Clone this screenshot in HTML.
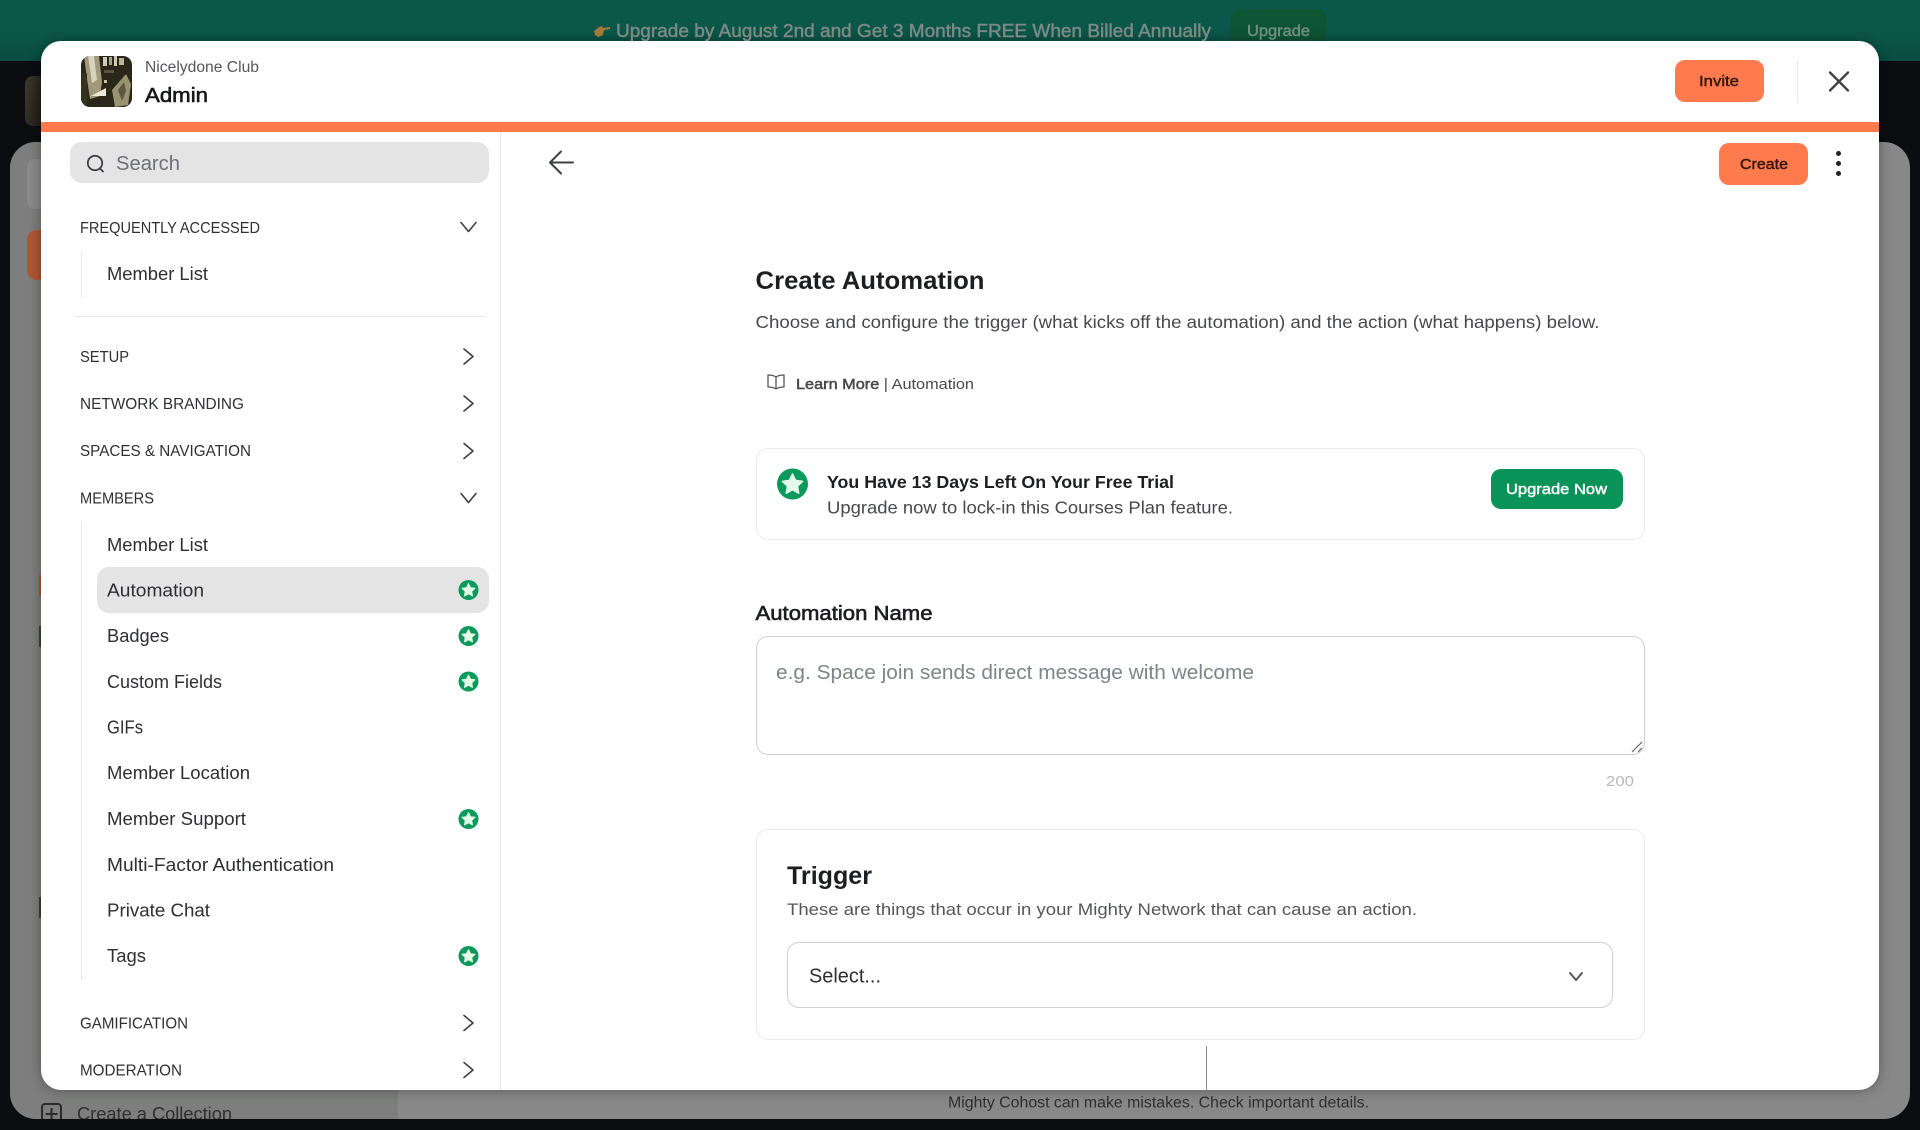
<!DOCTYPE html>
<html lang="en">
<head>
<meta charset="utf-8">
<title>Create Automation</title>
<style>
html,body{margin:0;padding:0;width:1920px;height:1130px;overflow:hidden;background:#0b0d11;font-family:"Liberation Sans",sans-serif}
.a{position:absolute;box-sizing:border-box}
svg{position:absolute;left:0;top:0;filter:blur(.3px)}
text{font-family:"Liberation Sans",sans-serif;white-space:pre}
.sec{font-size:15.5px;fill:#2f3033}
.it{font-size:18px;fill:#2e2f33}
.m{stroke-width:.45px}
</style>
</head>
<body>
<div class="a" style="left:0;top:0;width:1920px;height:61px;background:linear-gradient(#0b584a 0,#0b5749 55%,#094c3f 100%)"></div>
<div class="a" style="left:1231px;top:9px;width:96px;height:40px;border-radius:10px;background:#0d5534"></div>
<div class="a" style="left:25px;top:76px;width:30px;height:50px;border-radius:8px;background:linear-gradient(100deg,#3e3a2e,#1f1d16 60%,#3a3629)"></div>
<div class="a" style="left:10px;top:142px;width:1900px;height:977px;border-radius:26px;background:#888;overflow:hidden">
  <div class="a" style="left:0;top:0;width:388px;height:977px;background:#7d7e7d"></div>
  <div class="a" style="left:17px;top:17px;width:40px;height:50px;border-radius:8px;background:#8a8a8a"></div>
  <div class="a" style="left:17px;top:88px;width:40px;height:50px;border-radius:10px;background:#ad5735"></div>
  <div class="a" style="left:29px;top:433px;width:6px;height:21px;background:#ad5735"></div>
  <div class="a" style="left:29px;top:484px;width:6px;height:21px;background:#3d403f"></div>
  <div class="a" style="left:29px;top:755px;width:6px;height:21px;background:#3d3d38"></div>
</div>

<div class="a" style="left:41px;top:41px;width:1838px;height:1048.500px;border-radius:20px;background:#fff;overflow:hidden;box-shadow:0 0 12px rgba(0,0,0,.35)">
  <div class="a" style="left:0;top:81px;width:1838px;height:10px;background:#ff7b4d"></div>
  <div class="a" style="left:459px;top:91px;width:1px;height:958px;background:#e8e8e8"></div>
  <div class="a" style="left:29px;top:101px;width:419px;height:41px;border-radius:12px;background:#e4e4e4"></div>
  <div class="a" style="left:40px;top:210px;width:1px;height:46px;background:#e6e6e6"></div>
  <div class="a" style="left:34px;top:275px;width:409px;height:1px;background:#e6e6e6"></div>
  <div class="a" style="left:40px;top:481px;width:1px;height:458px;background:#e6e6e6"></div>
  <div class="a" style="left:56px;top:526px;width:392px;height:46px;border-radius:12px;background:#e4e4e4"></div>
  <div class="a" style="left:1634px;top:19px;width:89px;height:42px;border-radius:10px;background:#ff7b4d"></div>
  <div class="a" style="left:1756px;top:20px;width:1px;height:41px;background:#e6e6e6"></div>
  <div class="a" style="left:1678px;top:102px;width:89px;height:42px;border-radius:10px;background:#ff7b4d"></div>
  <div class="a" style="left:715px;top:407px;width:889px;height:92px;border-radius:12px;border:1.5px solid #ebebeb;background:#fff"></div>
  <div class="a" style="left:1450px;top:428px;width:132px;height:40px;border-radius:10px;background:#0a9359"></div>
  <div class="a" style="left:715px;top:595px;width:889px;height:119px;border-radius:12px;border:1.5px solid #cfcfcf;background:#fff"></div>
  <div class="a" style="left:715px;top:788px;width:889px;height:211px;border-radius:12px;border:1.5px solid #ebebeb;background:#fff"></div>
  <div class="a" style="left:746px;top:901px;width:826px;height:66px;border-radius:12px;border:1.5px solid #cfcfcf;background:#fff"></div>
  <div class="a" style="left:1165px;top:1005px;width:1px;height:44px;background:#8a8a8a"></div>
</div>

<svg width="1920" height="1130" viewBox="0 0 1920 1130">
  <defs>
    <clipPath id="av"><rect x="81" y="56" width="51" height="51" rx="9"/></clipPath>
    <clipPath id="top"><rect x="0" y="0" width="1920" height="41"/></clipPath>
    <clipPath id="bot"><rect x="0" y="1089" width="1920" height="30"/></clipPath>
    <symbol id="st" viewBox="0 0 20 20">
      <circle cx="10" cy="10" r="10" fill="#0a9a5c"/>
      <path d="M10 3.600l2 4.100 4.500.6-3.300 3.100.8 4.500-4-2.200-4 2.200.8-4.500-3.300-3.100 4.500-.6z" fill="#e3fbe9" stroke="#e3fbe9" stroke-width="1" stroke-linejoin="round"/>
    </symbol>
    <path id="cr" d="M-4.500-7.500L4.500 0L-4.500 7.500" fill="none" stroke="#3f4044" stroke-width="1.600" stroke-linecap="round" stroke-linejoin="round"/>
    <path id="cd" d="M-7.500-4.500L0 4.500L7.500-4.500" fill="none" stroke="#3f4044" stroke-width="1.600" stroke-linecap="round" stroke-linejoin="round"/>
  </defs>

  <g clip-path="url(#top)">
    <path d="M594 31l5-4 3-1 1 2 7-1v2l-6 1-1 5-5 2-3-2z" fill="#a67a36"/>
    <text class="m" x="616" y="37" font-size="18" fill="#7d8a85" stroke="#7d8a85" textLength="595" lengthAdjust="spacingAndGlyphs">Upgrade by August 2nd and Get 3 Months FREE When Billed Annually</text>
    <text class="m" x="1247" y="36" font-size="15.500" fill="#6f8f7e" stroke="#6f8f7e" textLength="63" lengthAdjust="spacingAndGlyphs">Upgrade</text>
  </g>

  <g clip-path="url(#bot)">
    <rect x="42" y="1104" width="19" height="19" rx="3" fill="none" stroke="#2a2b2a" stroke-width="2"/>
    <path d="M51.500 1108v12M45.500 1114h12" stroke="#2a2b2a" stroke-width="2"/>
    <text x="77" y="1120" font-size="18" fill="#2e2f2e" textLength="155" lengthAdjust="spacingAndGlyphs">Create a Collection</text>
  </g>
  <text x="948" y="1107.500" font-size="15.500" fill="#2e2e2e" textLength="421" lengthAdjust="spacingAndGlyphs">Mighty Cohost can make mistakes. Check important details.</text>

  <g clip-path="url(#av)">
    <rect x="81" y="56" width="51" height="51" fill="#2a2619"/>
    <path d="M84 56h15l3 26-2 14-10 3-3-20z" fill="#a09a7a"/>
    <path d="M88 56h6l3 24-5 3z" fill="#d6d3bf"/>
    <rect x="81" y="73" width="6" height="34" fill="#35311f"/>
    <rect x="103" y="57" width="4" height="9" fill="#cfccb6"/>
    <rect x="109" y="57" width="3" height="8" fill="#a8a488"/>
    <rect x="114" y="56" width="3" height="10" fill="#cfccb6"/>
    <rect x="119" y="58" width="5" height="7" fill="#b8b498"/>
    <rect x="104" y="70" width="10" height="3" fill="#5a5540"/>
    <path d="M112 90l14-16 5 10-3 21-13 2z" fill="#9a9370"/>
    <path d="M118 90l6-8 2 9-4 10z" fill="#5c5740"/>
    <path d="M91 96l15-8v8z" fill="#ebe8d6"/>
    <rect x="104" y="80" width="3" height="3" fill="#c4c0a4"/>
  </g>
  <text x="145" y="72" font-size="15.500" fill="#55565a" textLength="114" lengthAdjust="spacingAndGlyphs">Nicelydone Club</text>
  <text x="145" y="102" font-size="20" fill="#17181b" stroke="#17181b" stroke-width=".6" textLength="63" lengthAdjust="spacingAndGlyphs">Admin</text>
  <text class="m" x="1699" y="86" font-size="15" fill="#35170c" stroke="#35170c" textLength="40" lengthAdjust="spacingAndGlyphs">Invite</text>
  <path d="M1830 72.500L1848 90.500M1848 72.500L1830 90.500" stroke="#3f4044" stroke-width="2.300" stroke-linecap="round"/>

  <circle cx="95" cy="163" r="7.200" fill="none" stroke="#3f4044" stroke-width="1.800"/>
  <path d="M100 168.500L103 171.500" stroke="#3f4044" stroke-width="1.800" stroke-linecap="round"/>
  <text x="116" y="170" font-size="20" fill="#6e7075" textLength="64" lengthAdjust="spacingAndGlyphs">Search</text>

  <text class="sec" x="80" y="233" textLength="180" lengthAdjust="spacingAndGlyphs">FREQUENTLY ACCESSED</text>
  <use href="#cd" x="468.500" y="227"/>
  <text class="it" x="107" y="280" textLength="101" lengthAdjust="spacingAndGlyphs">Member List</text>

  <text class="sec" x="80" y="362" textLength="49" lengthAdjust="spacingAndGlyphs">SETUP</text>
  <use href="#cr" x="468.500" y="356.500"/>
  <text class="sec" x="80" y="409" textLength="164" lengthAdjust="spacingAndGlyphs">NETWORK BRANDING</text>
  <use href="#cr" x="468.500" y="403.500"/>
  <text class="sec" x="80" y="456" textLength="171" lengthAdjust="spacingAndGlyphs">SPACES &amp; NAVIGATION</text>
  <use href="#cr" x="468.500" y="451"/>
  <text class="sec" x="80" y="503.500" textLength="74" lengthAdjust="spacingAndGlyphs">MEMBERS</text>
  <use href="#cd" x="468.500" y="498"/>

  <text class="it" x="107" y="551" textLength="101" lengthAdjust="spacingAndGlyphs">Member List</text>
  <text class="it" x="107" y="596.500" textLength="97" lengthAdjust="spacingAndGlyphs">Automation</text>
  <use href="#st" x="458.500" y="580" width="20" height="20"/>
  <text class="it" x="107" y="642" textLength="62" lengthAdjust="spacingAndGlyphs">Badges</text>
  <use href="#st" x="458.500" y="626" width="20" height="20"/>
  <text class="it" x="107" y="688" textLength="115" lengthAdjust="spacingAndGlyphs">Custom Fields</text>
  <use href="#st" x="458.500" y="671.500" width="20" height="20"/>
  <text class="it" x="107" y="733.500" textLength="36" lengthAdjust="spacingAndGlyphs">GIFs</text>
  <text class="it" x="107" y="779" textLength="143" lengthAdjust="spacingAndGlyphs">Member Location</text>
  <text class="it" x="107" y="825" textLength="139" lengthAdjust="spacingAndGlyphs">Member Support</text>
  <use href="#st" x="458.500" y="809" width="20" height="20"/>
  <text class="it" x="107" y="871" textLength="227" lengthAdjust="spacingAndGlyphs">Multi-Factor Authentication</text>
  <text class="it" x="107" y="916.500" textLength="103" lengthAdjust="spacingAndGlyphs">Private Chat</text>
  <text class="it" x="107" y="962" textLength="39" lengthAdjust="spacingAndGlyphs">Tags</text>
  <use href="#st" x="458.500" y="946" width="20" height="20"/>

  <text class="sec" x="80" y="1028.500" textLength="108" lengthAdjust="spacingAndGlyphs">GAMIFICATION</text>
  <use href="#cr" x="468.500" y="1023"/>
  <text class="sec" x="80" y="1075.500" textLength="102" lengthAdjust="spacingAndGlyphs">MODERATION</text>
  <use href="#cr" x="468.500" y="1070"/>

  <path d="M573 162.500H550M561 151.500L550 162.500L561 173.500" fill="none" stroke="#3f4044" stroke-width="2" stroke-linecap="round" stroke-linejoin="round"/>
  <text class="m" x="1740" y="169" font-size="15" fill="#35170c" stroke="#35170c" textLength="48" lengthAdjust="spacingAndGlyphs">Create</text>
  <circle cx="1838.500" cy="153.500" r="2.500" fill="#222"/>
  <circle cx="1838.500" cy="163.500" r="2.500" fill="#222"/>
  <circle cx="1838.500" cy="173.500" r="2.500" fill="#222"/>

  <text x="755.500" y="289" font-size="25" font-weight="700" fill="#1d1e21" textLength="229" lengthAdjust="spacingAndGlyphs">Create Automation</text>
  <text x="755.500" y="328" font-size="17.500" fill="#47484c" textLength="844" lengthAdjust="spacingAndGlyphs">Choose and configure the trigger (what kicks off the automation) and the action (what happens) below.</text>

  <path d="M776 377c-2-1.500-5-2-8-2v12c3 0 6 .5 8 2c2-1.500 5-2 8-2v-12c-3 0-6 .5-8 2zM776 377v12" fill="none" stroke="#55565a" stroke-width="1.300" stroke-linejoin="round"/>
  <text x="796" y="389" font-size="15" fill="#47484c" textLength="178" lengthAdjust="spacingAndGlyphs"><tspan stroke="#47484c" stroke-width=".5">Learn More</tspan> | Automation</text>

  <use href="#st" x="777" y="468.500" width="31" height="31"/>
  <text x="827" y="488" font-size="17.500" font-weight="700" fill="#1d1e21" textLength="347" lengthAdjust="spacingAndGlyphs">You Have 13 Days Left On Your Free Trial</text>
  <text x="827" y="513.500" font-size="17.500" fill="#47484c" textLength="406" lengthAdjust="spacingAndGlyphs">Upgrade now to lock-in this Courses Plan feature.</text>
  <text class="m" x="1506" y="494" font-size="15" fill="#fff" stroke="#fff" textLength="101" lengthAdjust="spacingAndGlyphs">Upgrade Now</text>

  <text x="755.500" y="620" font-size="20" fill="#1d1e21" stroke="#1d1e21" stroke-width=".6" textLength="177" lengthAdjust="spacingAndGlyphs">Automation Name</text>
  <text x="776" y="679" font-size="20" fill="#7e848a" textLength="478" lengthAdjust="spacingAndGlyphs">e.g. Space join sends direct message with welcome</text>
  <path d="M1632 752L1642 742M1638 752L1642 748" stroke="#666" stroke-width="1.200"/>
  <text x="1606" y="786" font-size="15" fill="#b9b9b9" textLength="28" lengthAdjust="spacingAndGlyphs">200</text>

  <text x="787" y="884" font-size="25" font-weight="700" fill="#1d1e21" textLength="85" lengthAdjust="spacingAndGlyphs">Trigger</text>
  <text x="787" y="915" font-size="17" fill="#55565a" textLength="630" lengthAdjust="spacingAndGlyphs">These are things that occur in your Mighty Network that can cause an action.</text>
  <text x="809" y="982.500" font-size="20" fill="#2e2f33" textLength="72" lengthAdjust="spacingAndGlyphs">Select...</text>
  <path d="M1570 973L1576 980L1582 973" fill="none" stroke="#55565a" stroke-width="2" stroke-linecap="round" stroke-linejoin="round"/>
</svg>
</body>
</html>
